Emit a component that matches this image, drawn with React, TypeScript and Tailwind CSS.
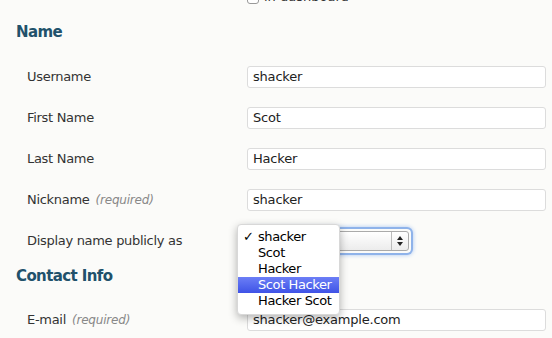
const font = { fontFamily: '"DejaVu Sans", "Lucida Grande", sans-serif' };

type Row = { label: string; required?: boolean; value: string };

const nameRows: Row[] = [
  { label: 'Username', value: 'shacker' },
  { label: 'First Name', value: 'Scot' },
  { label: 'Last Name', value: 'Hacker' },
  { label: 'Nickname', required: true, value: 'shacker' },
];

const options = ['shacker', 'Scot', 'Hacker', 'Scot Hacker', 'Hacker Scot'];

const Label = ({ label, required }: { label: string; required?: boolean }) => (
  <div className="w-[220px] shrink-0 text-[13px] tracking-[-0.3px] text-[#333]">
    {label}
    {required && <span className="ml-[6px] text-[12px] italic tracking-[-0.2px] text-[#888]">(required)</span>}
  </div>
);

const TextField = ({ value }: { value: string }) => (
  <div className="flex h-[22px] w-[299px] items-center rounded-[3px] border border-[#dcdcdc] bg-white pl-[5px] text-[13px] tracking-[-0.2px] text-[#222]">
    {value}
  </div>
);

const App = () => {
  return (
    <div className="min-h-[338px] w-[552px] overflow-hidden bg-[#fbfbf9] pl-4" style={font}>
      <div className="-mt-[10px] ml-[231px] flex h-[14px] items-end gap-[5px] text-[13px] text-[#333]">
        <span className="h-[12px] w-[12px] rounded-[3px] border border-[#999] bg-white" />
        <span className="leading-[14px]">in dashboard</span>
      </div>

      <h2 className="mt-[18px] mb-[14px] text-[15px] font-bold leading-[20px] tracking-[-0.6px] text-[#21516b]">Name</h2>

      <div className="pl-[11px]">
        {nameRows.map((r) => (
          <div key={r.label} className="flex h-[41px] items-center">
            <Label label={r.label} required={r.required} />
            <TextField value={r.value} />
          </div>
        ))}

        <div className="relative flex h-[41px] items-center">
          <Label label="Display name publicly as" />
          <div className="-ml-[2px] rounded-[4px] p-[2px] shadow-[0_0_0_2px_#8fb3ea,0_0_4px_2px_#a9c6f2]">
            <div className="flex h-[20px] w-[162px] rounded-[3px] border border-[#aaa] bg-gradient-to-b from-white to-[#ececec]">
              <div className="flex-1" />
              <div className="flex w-[17px] flex-col items-center justify-center gap-[2px] border-l border-[#bbb]">
                <span className="h-0 w-0 border-x-[3px] border-b-[4px] border-x-transparent border-b-[#222]" />
                <span className="h-0 w-0 border-x-[3px] border-t-[4px] border-x-transparent border-t-[#222]" />
              </div>
            </div>
          </div>

          <ul className="absolute left-[210px] top-[4px] w-[103px] rounded-[4px] border border-[#d8d8d8] bg-white pt-[4px] pb-[5px] text-[13px] tracking-[-0.4px] text-black shadow-[0_3px_8px_rgba(0,0,0,0.3)]">
            {options.map((o, i) => (
              <li
                key={o}
                className={
                  i === 3
                    ? 'relative h-[16px] bg-gradient-to-b from-[#6c7ef6] to-[#3f52e6] pl-[20px] leading-[16px] text-white'
                    : 'relative h-[16px] pl-[20px] leading-[16px]'
                }
              >
                {i === 0 && <span className="absolute left-[5px] top-0">✓</span>}
                {o}
              </li>
            ))}
          </ul>
        </div>
      </div>

      <h2 className="mt-[5px] mb-[13px] text-[15px] font-bold leading-[20px] tracking-[-0.6px] text-[#21516b]">Contact Info</h2>

      <div className="pl-[11px]">
        <div className="flex h-[41px] items-center">
          <Label label="E-mail" required />
          <TextField value="shacker@example.com" />
        </div>
      </div>
    </div>
  );
};

export default App;
